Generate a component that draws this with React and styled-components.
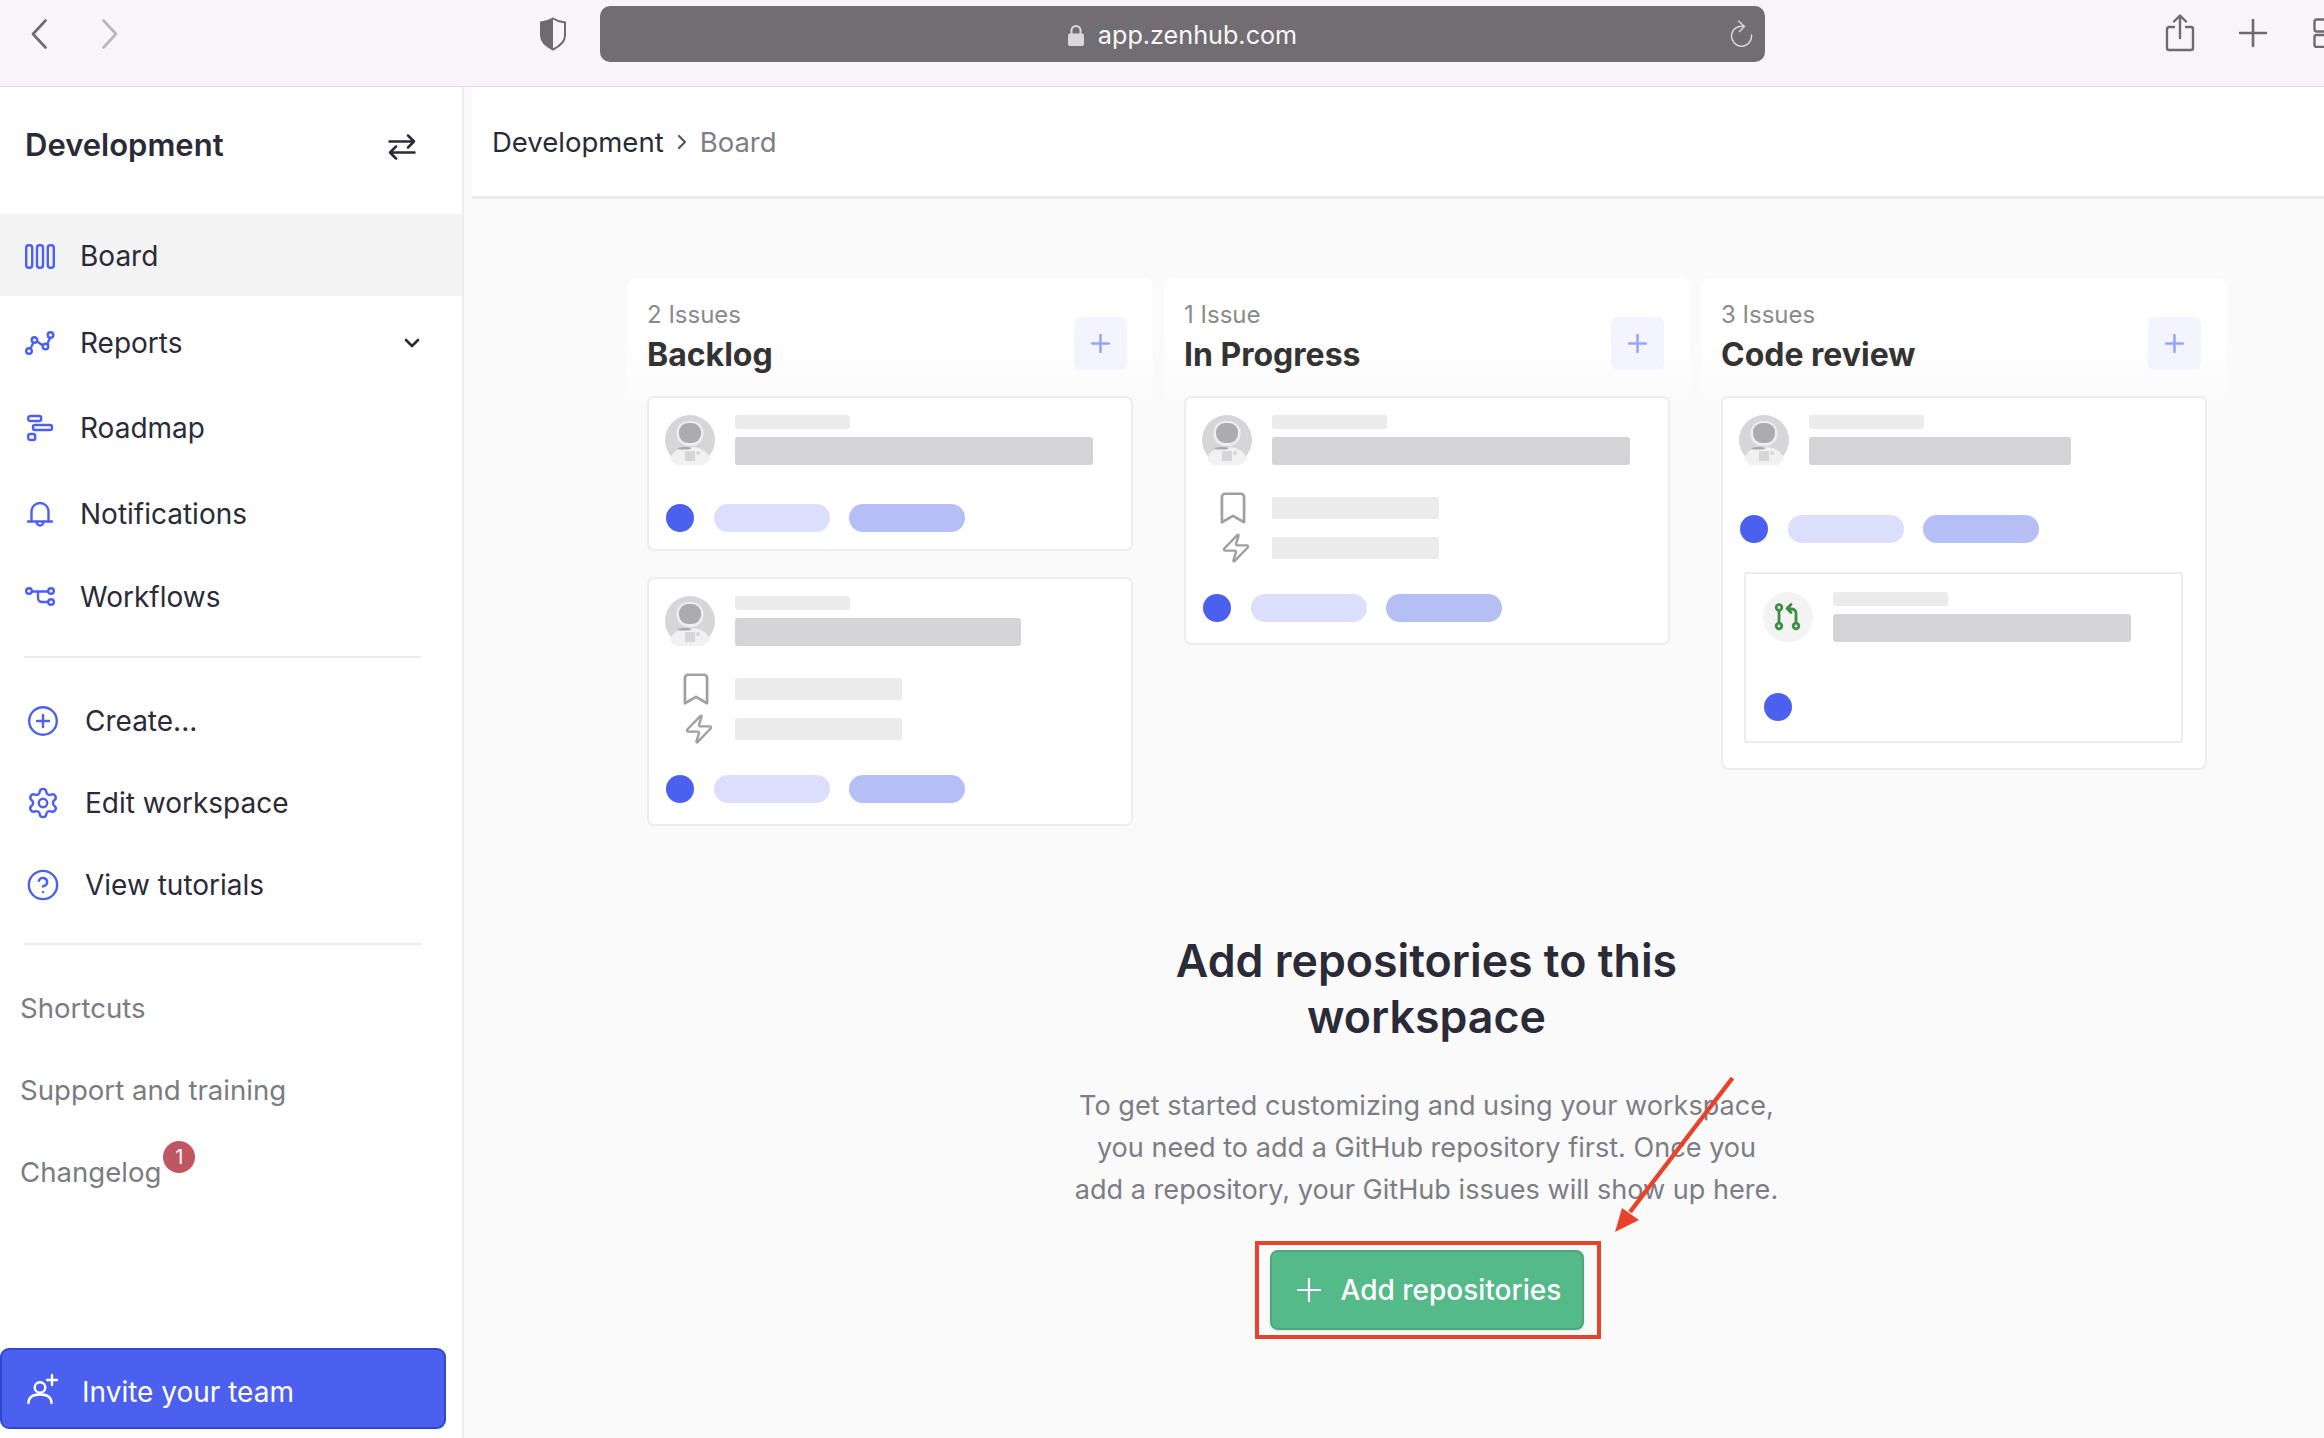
import React from "react";
import styled, { createGlobalStyle } from "styled-components";
import { Settings, CircleHelp, Bookmark, Zap, ChevronDown, ChevronRight } from "lucide-react";

const GlobalStyle = createGlobalStyle`
  html, body {
    margin: 0;
    padding: 0;
    overflow: hidden;
    background: #fff;
    font-family: Inter, "Liberation Sans", sans-serif;
    color: #2b2b38;
  }
  * { box-sizing: border-box; }
`;

const BLUE = "#4c60f0";

const Page = styled.div`
  position: relative;
  width: 2324px;
  height: 1438px;
  overflow: hidden;
  display: flex;
  flex-direction: column;
`;

/* browser chrome */
const Toolbar = styled.div`
  flex: none;
  height: 87px;
  padding: 0 0 18px 31px;
  display: flex;
  align-items: center;
  background: #f8f4fa;
  border-bottom: 1px solid #dddcde;
`;

const ToolIcon = styled.svg`
  flex: none;
  margin-left: ${(p) => p.$left || 0}px;
  margin-top: ${(p) => p.$top || 0}px;
`;

const UrlBar = styled.div`
  position: relative;
  flex: none;
  width: 1165px;
  height: 56px;
  margin-left: 33px;
  padding-top: 2px;
  border-radius: 10px;
  background: #726d73;
  display: flex;
  align-items: center;
  justify-content: center;
  gap: 14px;
  color: #f8f8f8;
  font-size: 25.2px;
`;

const Reload = styled.svg`
  position: absolute;
  right: 12px;
  top: 14px;
`;

/* app shell */
const Shell = styled.div`
  flex: 1;
  min-height: 0;
  display: flex;
`;

const Sidebar = styled.aside`
  flex: none;
  width: 464px;
  display: flex;
  flex-direction: column;
  background: #fff;
  border-right: 2px solid #ececec;
`;

const SideHead = styled.div`
  height: 127px;
  padding: 38px 46px 0 25px;
  display: flex;
  justify-content: space-between;
  align-items: flex-start;
`;

const WorkspaceName = styled.div`
  font-size: 31px;
  line-height: 40px;
  font-weight: 600;
`;

const SwapIcon = styled.svg`
  margin-top: 8px;
`;

const NavRow = styled.div`
  flex: none;
  height: ${(p) => p.$h || 82}px;
  padding: 2px 38px 0 ${(p) => p.$pad || 25}px;
  display: flex;
  align-items: center;
  background: ${(p) => (p.$active ? "#f4f4f4" : "transparent")};
  font-size: 28px;
  color: #2b2b38;
`;

const NavIcon = styled.span`
  flex: none;
  width: ${(p) => p.$w || 55}px;
  display: flex;
  align-items: center;
`;

const NavChevron = styled.span`
  margin-left: auto;
  display: flex;
`;

const Divider = styled.div`
  flex: none;
  height: 2px;
  margin: ${(p) => p.$top}px 41px 21px 24px;
  background: #ebebeb;
`;

const SideLink = styled.div`
  flex: none;
  height: 82px;
  padding: 2px 0 0 20px;
  display: flex;
  align-items: center;
  font-size: 27.6px;
  color: #7b7b84;
`;

const Badge = styled.span`
  flex: none;
  width: 32px;
  height: 32px;
  margin: -30px 0 0 2px;
  border-radius: 50%;
  background: #bf5661;
  color: #fff;
  font-size: 20px;
  display: flex;
  align-items: center;
  justify-content: center;
`;

const InviteButton = styled.div`
  flex: none;
  width: 446px;
  height: 81px;
  margin: auto 0 9px 0;
  padding-left: 25px;
  display: flex;
  align-items: center;
  border: 2px solid #2f47d0;
  border-radius: 9px;
  background: ${BLUE};
  color: #fff;
  font-size: 28px;
`;

const InviteLabel = styled.span`
  margin: 6px 0 0 23px;
`;

/* main area */
const Main = styled.main`
  flex: 1;
  min-width: 0;
  background: #fafafa;
`;

const Crumbs = styled.div`
  height: 112px;
  margin-left: 8px;
  padding: 35px 0 0 20px;
  display: flex;
  align-items: flex-start;
  background: #fff;
  border-bottom: 3px solid #ececec;
  font-size: 27.5px;
  line-height: 40px;
`;

const CrumbSep = styled.span`
  width: 36px;
  height: 40px;
  display: flex;
  align-items: center;
  justify-content: center;
  color: #55555f;
`;

const CrumbLast = styled.span`
  color: #7e7e86;
`;

const BoardArea = styled.div`
  width: 1599px;
  margin-left: 163px;
  padding-top: 79px;
`;

const Columns = styled.div`
  height: 590px;
  display: flex;
  align-items: flex-start;
  gap: 11px;
`;

const Column = styled.section`
  flex: none;
  width: 526px;
  padding: 22px 20px 22px;
  border-radius: 10px;
  background: linear-gradient(#ffffff 0, #ffffff 60px, #fafafa 130px);
`;

const ColumnHead = styled.div`
  display: flex;
  justify-content: space-between;
  align-items: flex-start;
  padding-right: 6px;
  margin-bottom: 21px;
`;

const IssueCount = styled.div`
  font-size: 24px;
  line-height: 30px;
  color: #8a8a8a;
`;

const ColumnTitle = styled.div`
  margin-top: 5px;
  font-size: 32px;
  line-height: 40px;
  font-weight: 700;
  color: #333;
`;

const AddCard = styled.div`
  width: 53px;
  height: 53px;
  margin-top: 17px;
  border-radius: 7px;
  background: #f3f4fe;
  display: flex;
  align-items: center;
  justify-content: center;
`;

const CardStack = styled.div`
  display: flex;
  flex-direction: column;
  gap: 26px;
`;

const Card = styled.div`
  padding: 17px 16px ${(p) => p.$bottom || 21}px 16px;
  background: #fff;
  border: 2px solid #ededed;
  border-radius: 7px;
`;

const NestedCard = styled.div`
  width: 439px;
  margin: 29px 0 0 5px;
  padding: 18px 17px 20px;
  border: 2px solid #ededed;
  border-radius: 3px;
`;

const TopRow = styled.div`
  display: flex;
  gap: 20px;
`;

const AvatarSlot = styled.div`
  flex: none;
  width: 50px;
  height: 50px;
  border-radius: 50%;
`;

const PrSlot = styled(AvatarSlot)`
  background: #f3f3f3;
  display: flex;
  align-items: center;
  justify-content: center;
`;

const SmallBar = styled.div`
  width: 115px;
  height: 14px;
  border-radius: 3px;
  background: #ebebeb;
`;

const LargeBar = styled.div`
  width: ${(p) => p.$w}px;
  height: 28px;
  margin-top: 8px;
  border-radius: 3px;
  background: #d4d4d6;
`;

const MetaList = styled.div`
  margin-top: 28px;
  display: flex;
  flex-direction: column;
  gap: 10px;
`;

const MetaRow = styled.div`
  height: 30px;
  display: flex;
  align-items: center;
  gap: 20px;
`;

const MetaIcon = styled.div`
  width: 50px;
  display: flex;
  justify-content: flex-end;
  color: #a0a0a0;
`;

const MetaBar = styled.div`
  width: 167px;
  height: 22px;
  border-radius: 2px;
  background: #ebebeb;
`;

const PillRow = styled.div`
  margin-top: ${(p) => p.$top}px;
  margin-left: 1px;
  display: flex;
  align-items: center;
  gap: 19.5px;
`;

const Dot = styled.div`
  width: 28px;
  height: 28px;
  border-radius: 50%;
  background: ${BLUE};
`;

const Pill = styled.div`
  width: 116px;
  height: 28px;
  border-radius: 14px;
  background: ${(p) => (p.$strong ? "#b6bef6" : "#dcdffb")};
`;

const EmptyState = styled.div`
  display: flex;
  flex-direction: column;
  align-items: center;
  text-align: center;
`;

const EmptyTitle = styled.h2`
  width: 600px;
  margin: 65px 0 0;
  font-size: 44.7px;
  line-height: 56px;
  font-weight: 600;
  color: #2b2b38;
`;

const EmptyText = styled.p`
  width: 708px;
  margin: 40px 0 0;
  font-size: 27.1px;
  line-height: 42px;
  color: #7d7d85;
`;

const RedFrame = styled.div`
  margin: 30px 0 0 2px;
  padding: 5px 13px 5px 11px;
  border: 4px solid #e8432a;
`;

const AddButton = styled.div`
  width: 314px;
  height: 80px;
  padding-left: 25px;
  display: flex;
  align-items: center;
  gap: 20px;
  border: 2px solid #4ea77c;
  border-radius: 8px;
  background: #55ba89;
  color: #fff;
  font-size: 28px;
  font-weight: 500;
  box-shadow: 0 1px 3px rgba(0, 0, 0, 0.12);
`;

const Annotation = styled.svg`
  position: absolute;
  left: 1600px;
  top: 1070px;
`;

const Avatar = () => (
  <svg width="50" height="50" viewBox="0 0 50 50">
    <circle cx="25" cy="25" r="25" fill="#d6d6d8" />
    <path d="M5 44c3-9 11-12 20-12s17 3 20 12a25 25 0 0 1-40 0z" fill="#f1f1f1" />
    <rect x="11.500" y="6" width="27" height="25" rx="12" fill="#eeeeee" />
    <rect x="14" y="8" width="22" height="20" rx="9" fill="#acacb0" />
    <path d="M12 33.500c4-2 11-2 15-.500l-3 1.500h-9z" fill="#a9a9ad" />
    <rect x="20" y="36" width="10" height="10" fill="#d6d6d8" />
    <circle cx="33" cy="38" r="2" fill="#d6d6d8" />
  </svg>
);

const PlusMark = ({ size = 19, color = "#98a3f5", width = 2.5 }) => (
  <svg width={size} height={size} viewBox={`0 0 ${size} ${size}`} fill="none" stroke={color} strokeWidth={width} strokeLinecap="round">
    <path d={`M${size / 2} 1V${size - 1}M1 ${size / 2}H${size - 1}`} />
  </svg>
);

const PrIcon = () => (
  <svg width="28" height="28" viewBox="0 0 28 28" fill="none" stroke="#3e8e41" strokeWidth="2.8" strokeLinecap="round" strokeLinejoin="round">
    <circle cx="5" cy="4.500" r="2.800" />
    <circle cx="5" cy="23" r="2.800" />
    <circle cx="22" cy="23" r="2.800" />
    <path d="M5 7.500v12.500M22 20V10a4 4 0 0 0-4-4h-4M17 1.500L13 5.500l4 4" />
  </svg>
);

const SkeletonTop = ({ bar }) => (
  <TopRow>
    <AvatarSlot><Avatar /></AvatarSlot>
    <div>
      <SmallBar />
      <LargeBar $w={bar} />
    </div>
  </TopRow>
);

const Pills = ({ top }) => (
  <PillRow $top={top}>
    <Dot />
    <Pill />
    <Pill $strong />
  </PillRow>
);

const Meta = () => (
  <MetaList>
    <MetaRow>
      <MetaIcon><Bookmark size={38} strokeWidth={1.7} /></MetaIcon>
      <MetaBar />
    </MetaRow>
    <MetaRow>
      <MetaIcon><Zap size={32} strokeWidth={1.8} /></MetaIcon>
      <MetaBar />
    </MetaRow>
  </MetaList>
);

const BoardColumn = ({ count, title, children }) => (
  <Column>
    <ColumnHead>
      <div>
        <IssueCount>{count}</IssueCount>
        <ColumnTitle>{title}</ColumnTitle>
      </div>
      <AddCard><PlusMark /></AddCard>
    </ColumnHead>
    <CardStack>{children}</CardStack>
  </Column>
);

const navIcon = { fill: "none", stroke: BLUE, strokeWidth: 2.4, strokeLinecap: "round", strokeLinejoin: "round" };

const App = () => {
  return (
    <Page>
      <GlobalStyle />
      <Toolbar>
        <ToolIcon width="16" height="30" viewBox="0 0 16 30" fill="none" stroke="#6f6a70" strokeWidth="2.6" strokeLinecap="round" strokeLinejoin="round">
          <path d="M14.500 1.500L2 15l12.500 13.500" />
        </ToolIcon>
        <ToolIcon $left={55} width="16" height="30" viewBox="0 0 16 30" fill="none" stroke="#b9b5ba" strokeWidth="2.6" strokeLinecap="round" strokeLinejoin="round">
          <path d="M1.500 1.500L14 15 1.500 28.500" />
        </ToolIcon>
        <ToolIcon $left={421} width="28" height="34" viewBox="0 0 28 34">
          <path d="M14 1.500c4 2.500 8 3.500 12 4v13c0 6-5 10.500-12 14-7-3.500-12-8-12-14v-13c4-.500 8-1.500 12-4z" fill="none" stroke="#6f6a70" strokeWidth="2" />
          <path d="M14 1.500c-4 2.500-8 3.500-12 4v13c0 6 5 10.500 12 14z" fill="#6f6a70" />
        </ToolIcon>
        <UrlBar>
          <svg width="16" height="22" viewBox="0 0 16 22">
            <path d="M3.500 10V6.500a4.500 4.500 0 0 1 9 0V10" fill="none" stroke="#d9d7d9" strokeWidth="2" />
            <rect x="0" y="9.500" width="16" height="12.500" rx="2" fill="#d9d7d9" />
          </svg>
          app.zenhub.com
          <Reload width="24" height="28" viewBox="0 0 24 28" fill="none" stroke="#d9d7d9" strokeWidth="1.500" strokeLinecap="round" strokeLinejoin="round">
            <path d="M15 6.500A10 10 0 1 0 22.500 15M9.500 1l6 5.500-5 5" />
          </Reload>
        </UrlBar>
        <ToolIcon $left={400} $top={-3} width="30" height="38" viewBox="0 0 30 38" fill="none" stroke="#6f6a70" strokeWidth="2.4" strokeLinecap="round" strokeLinejoin="round">
          <path d="M9 13H4a2 2 0 0 0-2 2v19a2 2 0 0 0 2 2h22a2 2 0 0 0 2-2V15a2 2 0 0 0-2-2h-5M15 24V2M9 7.500L15 1.500l6 6" />
        </ToolIcon>
        <ToolIcon $left={44} $top={-2} width="28" height="28" viewBox="0 0 28 28" fill="none" stroke="#6f6a70" strokeWidth="2.6" strokeLinecap="round">
          <path d="M14 1v26M1 14h26" />
        </ToolIcon>
        <ToolIcon $left={46} $top={-2} width="28" height="30" viewBox="0 0 28 30" fill="none" stroke="#6f6a70" strokeWidth="2.4">
          <rect x="1.500" y="1.500" width="25" height="12" rx="2" />
          <rect x="1.500" y="17" width="25" height="12" rx="2" />
        </ToolIcon>
      </Toolbar>
      <Shell>
        <Sidebar>
          <SideHead>
            <WorkspaceName>Development</WorkspaceName>
            <SwapIcon width="28" height="28" viewBox="0 0 28 28" fill="none" stroke="#2b2b38" strokeWidth="2.500" strokeLinecap="round" strokeLinejoin="round">
              <path d="M1.500 8.500H26M20 2.500l6 6-6 6M26.500 19.500H2M8 13.500l-6 6 6 6" />
            </SwapIcon>
          </SideHead>
          <NavRow $active>
            <NavIcon>
              <svg width="30" height="25" viewBox="0 0 30 25" {...navIcon}>
                <rect x="1.200" y="1.200" width="6" height="22.600" rx="2.500" />
                <rect x="12" y="1.200" width="6" height="22.600" rx="2.500" />
                <rect x="22.800" y="1.200" width="6" height="22.600" rx="2.500" />
              </svg>
            </NavIcon>
            Board
          </NavRow>
          <NavRow $h={92}>
            <NavIcon>
              <svg width="30" height="25" viewBox="0 0 30 25" {...navIcon}>
                <path d="M5.500 17.500L8.500 11.500M12 10.500l6 4M22.500 12.500L25 7" />
                <circle cx="4" cy="20" r="2.800" />
                <circle cx="9.500" cy="9" r="2.800" />
                <circle cx="20.500" cy="15.500" r="2.800" />
                <circle cx="25.500" cy="4" r="2.800" />
              </svg>
            </NavIcon>
            Reports
            <NavChevron><ChevronDown size={24} strokeWidth={2.6} color="#2b2b38" /></NavChevron>
          </NavRow>
          <NavRow $h={78}>
            <NavIcon>
              <svg width="30" height="28" viewBox="0 0 30 28" {...navIcon}>
                <rect x="3.200" y="2" width="13" height="5" rx="2" />
                <rect x="8" y="11" width="19" height="5" rx="2" />
                <rect x="3.200" y="20" width="7" height="6" rx="2" />
              </svg>
            </NavIcon>
            Roadmap
          </NavRow>
          <NavRow $h={94}>
            <NavIcon>
              <svg width="30" height="28" viewBox="0 0 30 28" {...navIcon}>
                <path d="M6.500 21V11.500a8.500 8.500 0 0 1 17 0V21M3 21.500h24M11.500 22a3.500 3.500 0 0 0 7 0" />
              </svg>
            </NavIcon>
            Notifications
          </NavRow>
          <NavRow $h={72}>
            <NavIcon>
              <svg width="30" height="20" viewBox="0 0 30 20" {...navIcon}>
                <circle cx="4" cy="4" r="2.800" />
                <circle cx="26" cy="4" r="2.800" />
                <circle cx="26" cy="15" r="2.800" />
                <path d="M7 4.500h16M13 5v6a4 4 0 0 0 4 4h6" />
              </svg>
            </NavIcon>
            Workflows
          </NavRow>
          <Divider $top={24} />
          <NavRow $pad={26}>
            <NavIcon $w={59}>
              <svg width="34" height="34" viewBox="0 0 34 34" {...navIcon}>
                <circle cx="17" cy="17" r="13.800" />
                <path d="M17 11v12M11 17h12" />
              </svg>
            </NavIcon>
            Create...
          </NavRow>
          <NavRow $pad={26}>
            <NavIcon $w={59}>
              <Settings size={34} strokeWidth={1.7} color={BLUE} />
            </NavIcon>
            Edit workspace
          </NavRow>
          <NavRow $pad={26}>
            <NavIcon $w={59}>
              <CircleHelp size={34} strokeWidth={1.7} color={BLUE} />
            </NavIcon>
            View tutorials
          </NavRow>
          <Divider $top={18} />
          <SideLink>Shortcuts</SideLink>
          <SideLink>Support and training</SideLink>
          <SideLink>Changelog<Badge>1</Badge></SideLink>
          <InviteButton>
            <svg width="32" height="32" viewBox="0 0 32 32" fill="none" stroke="#fff" strokeWidth="2.4" strokeLinecap="round">
              <circle cx="13" cy="14.500" r="5.300" />
              <path d="M1.500 30c0-6 4-8.500 11.500-8.500S24.500 24 24.500 30M25 2v10M20 7h10" />
            </svg>
            <InviteLabel>Invite your team</InviteLabel>
          </InviteButton>
        </Sidebar>
        <Main>
          <Crumbs>
            Development
            <CrumbSep><ChevronRight size={24} strokeWidth={2.2} /></CrumbSep>
            <CrumbLast>Board</CrumbLast>
          </Crumbs>
          <BoardArea>
            <Columns>
              <BoardColumn count="2 Issues" title="Backlog">
                <Card $bottom={17}>
                  <SkeletonTop bar={358} />
                  <Pills top={39} />
                </Card>
                <Card>
                  <SkeletonTop bar={286} />
                  <Meta />
                  <Pills top={31} />
                </Card>
              </BoardColumn>
              <BoardColumn count="1 Issue" title="In Progress">
                <Card>
                  <SkeletonTop bar={358} />
                  <Meta />
                  <Pills top={31} />
                </Card>
              </BoardColumn>
              <BoardColumn count="3 Issues" title="Code review">
                <Card $bottom={25}>
                  <SkeletonTop bar={262} />
                  <Pills top={50} />
                  <NestedCard>
                    <TopRow>
                      <PrSlot><PrIcon /></PrSlot>
                      <div>
                        <SmallBar />
                        <LargeBar $w={298} />
                      </div>
                    </TopRow>
                    <PillRow $top={51}><Dot /></PillRow>
                  </NestedCard>
                </Card>
              </BoardColumn>
            </Columns>
            <EmptyState>
              <EmptyTitle>Add repositories to this workspace</EmptyTitle>
              <EmptyText>
                To get started customizing and using your workspace, you need to add a GitHub repository first. Once you add a repository, your GitHub issues will show up here.
              </EmptyText>
              <RedFrame>
                <AddButton>
                  <PlusMark size={24} color="#fff" width={2.2} />
                  Add repositories
                </AddButton>
              </RedFrame>
            </EmptyState>
          </BoardArea>
        </Main>
      </Shell>
      <Annotation width="150" height="170" viewBox="0 0 150 170">
        <path d="M132.500 8L30 142" fill="none" stroke="#e8432a" strokeWidth="4.500" />
        <path d="M15 162L22 138L39 150Z" fill="#e8432a" />
      </Annotation>
    </Page>
  );
};

export default App;
